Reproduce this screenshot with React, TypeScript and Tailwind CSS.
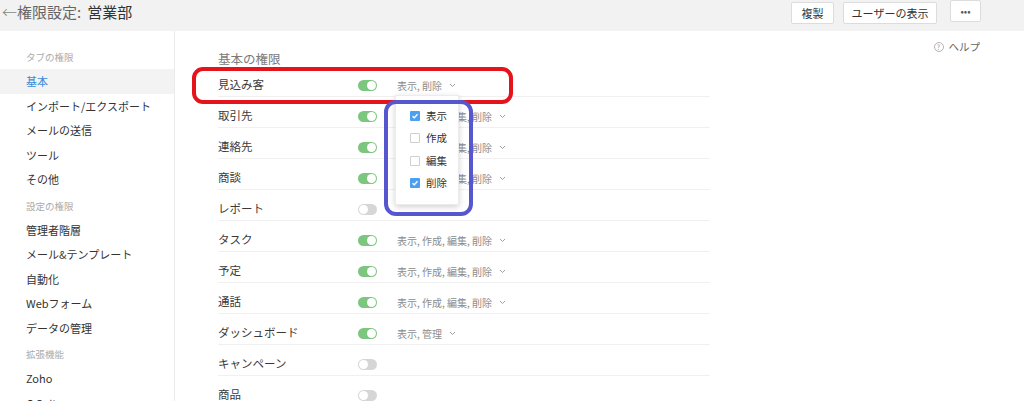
import React from "react";

// ── Data ───────────────────────────────────────────────────────────────────────
type Row = { label: string; on: boolean; perm?: string };

const FULL = "表示, 作成, 編集, 削除";

const rows: Row[] = [
  { label: "見込み客", on: true, perm: "表示, 削除" },
  { label: "取引先", on: true, perm: FULL },
  { label: "連絡先", on: true, perm: FULL },
  { label: "商談", on: true, perm: FULL },
  { label: "レポート", on: false },
  { label: "タスク", on: true, perm: FULL },
  { label: "予定", on: true, perm: FULL },
  { label: "通話", on: true, perm: FULL },
  { label: "ダッシュボード", on: true, perm: "表示, 管理" },
  { label: "キャンペーン", on: false },
  { label: "商品", on: false },
];

const sidebar: { title: string; items: string[] }[] = [
  { title: "タブの権限", items: ["基本", "インポート/エクスポート", "メールの送信", "ツール", "その他"] },
  { title: "設定の権限", items: ["管理者階層", "メール&テンプレート", "自動化", "Webフォーム", "データの管理"] },
  { title: "拡張機能", items: ["Zoho", "G Suite"] },
];

const options = [
  { label: "表示", checked: true },
  { label: "作成", checked: false },
  { label: "編集", checked: false },
  { label: "削除", checked: true },
];

// ── Small pieces ───────────────────────────────────────────────────────────────
function Toggle({ on }: { on: boolean }) {
  return (
    <div
      className={`w-[19px] h-[11px] rounded-full flex items-center px-[1px] shrink-0 ${
        on ? "bg-[#7cc67f] justify-end" : "bg-[#d6d6d6] justify-start"
      }`}
    >
      <div className="w-[9px] h-[9px] rounded-full bg-white" />
    </div>
  );
}

function Chevron() {
  return (
    <svg width="7" height="5" viewBox="0 0 7 5" className="shrink-0">
      <polyline points="1,1 3.5,3.5 6,1" fill="none" stroke="#a0a0a0" strokeWidth="1" />
    </svg>
  );
}

function Checkbox({ checked }: { checked: boolean }) {
  if (checked) {
    return (
      <div className="w-[10px] h-[10px] bg-[#4d9ff0] rounded-[1px] flex items-center justify-center shrink-0">
        <svg width="8" height="8" viewBox="0 0 8 8">
          <polyline points="1.5,4.2 3.3,5.8 6.5,2.3" fill="none" stroke="#fff" strokeWidth="1.3" />
        </svg>
      </div>
    );
  }
  return <div className="w-[10px] h-[10px] border border-[#cfcfcf] bg-white rounded-[1px] shrink-0" />;
}

function Dropdown() {
  return (
    <div className="absolute left-[-2px] top-[17px] w-[64px] bg-white border border-[#ececec] shadow-[0_2px_6px_rgba(0,0,0,0.18)] py-[9px] z-10">
      {options.map((o) => (
        <div key={o.label} className="h-[22.5px] flex items-center pl-[14px] gap-[6px]">
          <Checkbox checked={o.checked} />
          <span className="text-[10.5px] text-[#333]">{o.label}</span>
        </div>
      ))}
    </div>
  );
}

// ── App ────────────────────────────────────────────────────────────────────────
export default function App() {
  return (
    <div className="w-[1024px] h-[401px] overflow-hidden bg-white font-['Noto_Sans_CJK_JP',sans-serif] text-[#333]">
      {/* Header */}
      <div className="h-[31px] bg-[#f2f2f2] flex items-start justify-between pr-[43px]">
        <div className="pl-[2px] pt-[2px] text-[15px] leading-[20px] flex items-center">
          <span className="text-[#8a8a8a] font-light">←</span>
          <span className="text-[#666]">権限設定:</span>
          <span className="ml-[6px] text-[#333]">営業部</span>
        </div>
        <div className="flex items-start pt-[2px]">
          <button className="h-[22px] w-[43px] bg-white border border-[#dcdcdc] rounded-[2px] text-[11px] text-[#333]">
            複製
          </button>
          <button className="ml-[9px] h-[22px] w-[94px] bg-white border border-[#dcdcdc] rounded-[2px] text-[11px] text-[#333]">
            ユーザーの表示
          </button>
          <button className="ml-[13px] -mt-[2px] h-[22px] w-[31px] bg-white border border-[#dcdcdc] rounded-[2px] text-[10px] leading-none text-[#555] flex items-center justify-center">
            •••
          </button>
        </div>
      </div>

      <div className="flex h-[370px]">
        {/* Sidebar */}
        <aside className="w-[175px] shrink-0 border-r border-[#ebebeb] pt-[15px]">
          {sidebar.map((s, si) => (
            <div key={s.title} className={si > 0 ? "mt-[3px]" : ""}>
              <div className="h-[23px] flex items-center pl-[26px] text-[9.5px] text-[#ababab]">{s.title}</div>
              {s.items.map((it) => {
                const active = it === "基本";
                return (
                  <div
                    key={it}
                    className={`h-[24.5px] flex items-center pl-[26px] text-[11px] ${
                      active ? "bg-[#f3f3f3] text-[#3c8ad8]" : "text-[#333]"
                    }`}
                  >
                    {it}
                  </div>
                );
              })}
            </div>
          ))}
        </aside>

        {/* Main */}
        <main className="flex-1 flex pl-[43px] pt-[9px] pr-[44px]">
          <div className="w-[492px] mt-[12px]">
            <div className="h-[14px] leading-[14px] text-[12.5px] text-[#7a7a7a]">基本の権限</div>
            <div className="relative">
              {rows.map((r, i) => (
                <div key={r.label} className="h-[31px] pt-[8px] border-b border-[#f0f0f0] flex items-center">
                  <div className="w-[140px] text-[11.5px] text-[#3a3a3a]">{r.label}</div>
                  <Toggle on={r.on} />
                  {r.perm && (
                    <div className="relative ml-[20px] flex items-center gap-[7px] text-[10px] text-[#8c8c8c]">
                      <span>{r.perm}</span>
                      <Chevron />
                      {i === 0 && <Dropdown />}
                    </div>
                  )}
                </div>
              ))}

              {/* Annotation frames */}
              <div className="absolute left-[-26px] top-[1px] w-[321px] h-[37px] border-[4px] border-[#e4141d] rounded-[11px] z-20 pointer-events-none" />
              <div className="absolute left-[166px] top-[34px] w-[89px] h-[116px] border-[4px] border-[#5656cf] rounded-[12px] z-30 pointer-events-none" />
            </div>
          </div>

          <div className="ml-auto h-[14px] flex items-center gap-[5px] text-[10.5px] text-[#666]">
            <span className="w-[10px] h-[10px] rounded-full border border-[#b5b5b5] text-[7px] leading-none text-[#999] flex items-center justify-center">
              ?
            </span>
            <span>ヘルプ</span>
          </div>
        </main>
      </div>
    </div>
  );
}
